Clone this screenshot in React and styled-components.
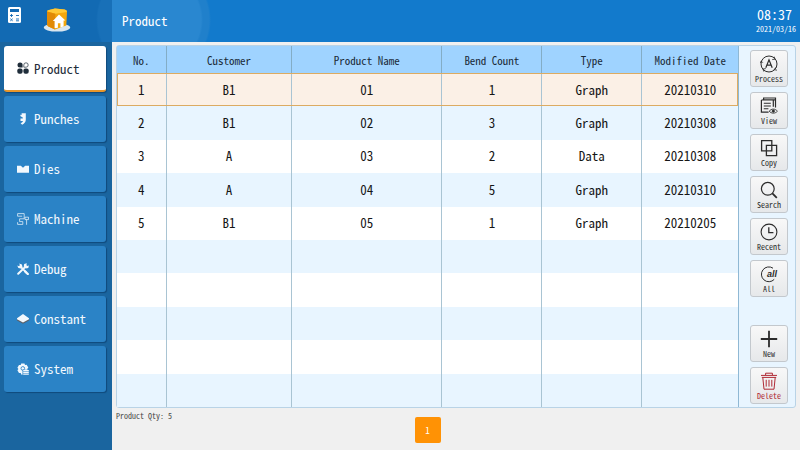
import React, { useState } from "react";
import styled, { createGlobalStyle, css } from "styled-components";

const menu = ["Product", "Punches", "Dies", "Machine", "Debug", "Constant", "System"];

// column widths in percent of the table
const columns = [
  { title: "No.", width: 8 },
  { title: "Customer", width: 20.2 },
  { title: "Product Name", width: 24.2 },
  { title: "Bend Count", width: 16.1 },
  { title: "Type", width: 16.1 },
  { title: "Modified Date", width: 15.4 },
];

const products = [
  ["1", "B1", "01", "1", "Graph", "20210310"],
  ["2", "B1", "02", "3", "Graph", "20210308"],
  ["3", "A", "03", "2", "Data", "20210308"],
  ["4", "A", "04", "5", "Graph", "20210310"],
  ["5", "B1", "05", "1", "Graph", "20210205"],
];

const PAGE_SIZE = 10;

const menuIcons = {
  Product: (
    <>
      <path d="M3 .4a2.6 2.6 0 0 1 2.6 2.8v2.2H3A2.5 2.5 0 0 1 3 .4z" fill="currentColor" />
      <rect x="0.3" y="6.4" width="5.3" height="5.3" rx="2" fill="currentColor" />
      <rect x="6.4" y="6.4" width="5.3" height="5.3" rx="2" fill="currentColor" />
      <path d="M9 .8a2.2 2.2 0 1 1 0 4.4H6.8V3A2.2 2.2 0 0 1 9 .8z" fill="none" stroke="currentColor" strokeWidth="0.7" />
    </>
  ),
  Punches: (
    <path
      d="M4.6 0.3h4.2v6.4c0 2-1.3 3.8-3.6 5l-1.6-1.4c1.4-.7 2.2-1.4 2.3-2.4H3.5V5.4h2.3V4.4L3.2 3l.6-1.4 1 .3z"
      fill="currentColor"
    />
  ),
  Dies: <path d="M0 2.8h3.8L6 4.8l2.2-2H12v7H0z" fill="currentColor" />,
  Machine: (
    <path
      d="M.6 3.2V.6h6.6v5.2H2.6v2.8h3.2v2.8H.6V9.2M.6 3.2h4.6M9.6 11.8V6.6M8 6.6V4.2h3.5v2.4H8"
      fill="none"
      stroke="currentColor"
      strokeWidth="0.9"
      opacity="0.8"
    />
  ),
  Debug: (
    <>
      <path d="M2.6 2.6 9.6 9.8" stroke="currentColor" strokeWidth="1.9" />
      <path d="M2.2.4 4.9 1.6l.6 2.3-1.7 1.5-2.4-.5L.2 2.4l1.9.9.9-.9z" fill="currentColor" />
      <path d="M8.2 8.5 10.8 11" stroke="currentColor" strokeWidth="2.4" strokeLinecap="round" />
      <path d="M1.2 10.7 8.8 3.4" stroke="currentColor" strokeWidth="2" strokeLinecap="round" />
      <path d="m9.8.2-.4 2 .6.7 1.9-.3-.6 2.3-2.6.6-2-1.9.5-2.7z" fill="currentColor" />
    </>
  ),
  Constant: (
    <>
      <path d="M0 5.5v1.9l6 3.3 6-3.3V5.5z" fill="#5b6068" />
      <path d="M6 1.1 12 5.2v1L6 9.4 0 6.2v-1z" fill="currentColor" />
    </>
  ),
  System: (
    <>
      <path
        d="M4.2.5h3.3l.5 1.4 1.6-.2 1.7 2.8-.9 1.3v1H5.5v4.9l-1.3-.1-.5-1.6-1.7.1L.4 7.3l1-1.3-1-1.3L2 1.9l1.7.1z"
        fill="currentColor"
      />
      <circle cx="5.8" cy="5.4" r="1.8" fill="none" stroke="#2b83c6" strokeWidth="0.9" />
      <path d="M6.2 7.6h5.6M6.2 9.4h5.6M6.2 11.2h5.6" stroke="currentColor" strokeWidth="1.2" />
    </>
  ),
};

const toolIcons = {
  Process: (
    <>
      <circle cx="9" cy="9" r="8" />
      <path d="m14.2 1.6.8 2.6-2.8.4M16.2 12.2l-2.2 2.4 3 .6M3.8 16.6 3 14l2.8-.4M.2 8l1-2 1.6 1.6" strokeWidth="0.8" />
      <path d="M5.8 12.8 9 4.8l3.2 8M6.9 10.2h4.2" strokeWidth="1.2" />
    </>
  ),
  View: (
    <>
      <path d="M3.6 2.2V1h11.9v9.5M15.5 2.8H2.6M1.4 3h11.9v6.8M1.4 3v12.2h7.2" strokeWidth="1.2" />
      <path d="M3.8 6.2h7M3.8 9h7M3.8 11.8h4.6" strokeWidth="1.1" />
      <path d="M9.2 14.2c2.3-2.8 5.9-2.8 8.2 0-2.3 2.6-5.9 2.6-8.2 0z" strokeWidth="0.9" />
      <circle cx="13.3" cy="14.1" r="1.1" fill="currentColor" />
    </>
  ),
  Copy: <path d="M1.6 1.6h10.2v10.2H1.6zM6.4 6.4h10.2v10.2H6.4z" strokeWidth="1.3" />,
  Search: (
    <>
      <circle cx="7.8" cy="7.8" r="6.4" strokeWidth="1.2" />
      <path d="m12.4 12.4 4.4 4.4" strokeWidth="1.8" />
    </>
  ),
  Recent: (
    <>
      <circle cx="9" cy="9" r="7.9" strokeWidth="1.1" />
      <path d="M8.8 4.2v5.4h4.6" strokeWidth="1.3" />
    </>
  ),
  All: (
    <>
      <path d="M13 3.2A7.4 7.4 0 1 0 14.2 14.4" />
      <text x="7" y="12" fontSize="9" fontWeight="bold" fontStyle="italic" fill="currentColor" stroke="none">
        all
      </text>
    </>
  ),
  New: <path d="M9 .8v16.4M.8 9h16.4" strokeWidth="1.8" />,
  Delete: (
    <path d="M1 3.4h16M5.6 3V1.2h6.8V3M1.8 5.4h14.4M2.8 5.6 4 17.2h10l1.2-11.6M6.2 7.8v6.8M9 7.8v6.8M11.8 7.8v6.8" />
  ),
};

const tools = ["Process", "View", "Copy", "Search", "Recent", "All"];

function ToolItem({ name, danger }) {
  return (
    <ToolButton type="button" $danger={danger}>
      <ToolIcon viewBox="0 0 18 18" aria-hidden="true">
        {toolIcons[name]}
      </ToolIcon>
      {name}
    </ToolButton>
  );
}

function HomeLogo() {
  return (
    <svg width="28" height="26" viewBox="0 0 28 26" aria-hidden="true">
      <ellipse cx="14" cy="20.6" rx="13.2" ry="4" fill="#d9e6ef" />
      <path d="M4 4.6Q4 3.4 6 3l6-1.4 9.5 1Q24 3 24 5l-.7 13.4L12 22.6l-6.6-3Q4.2 19 4.2 17.6z" fill="#f3a70c" />
      <path d="M4 4.6Q4 3.4 6 3l6-1.4 9.5 1Q24 3 24 5l-11.5 1.8z" fill="#ffc936" />
      <path d="m4 4.6 8.3 2.2-.3 15.8-6.6-3q-1.2-.6-1.2-2z" fill="#e18a05" />
      <path d="M9.8 14 16 7.6l6.4 6h-1.8v6l-3.2.8v-4.2h-2.5v4.6l-3.3.4V14z" fill="#fff" />
    </svg>
  );
}

function Calculator() {
  return (
    <svg width="13" height="16" viewBox="0 0 13 16" aria-hidden="true">
      <rect width="13" height="16" rx="1.5" fill="#fff" />
      <rect x="2" y="2" width="9" height="3" fill="#1269b3" />
      <path
        d="M2 8.5h3M3.5 7v3M8 8.5h3M2.3 11.7l2.4 2.2M4.7 11.7l-2.4 2.2M8 12h3M8 13.8h3"
        stroke="#1269b3"
        strokeWidth="0.9"
      />
    </svg>
  );
}

function App() {
  const [page, setPage] = useState("Product");
  const [selected, setSelected] = useState(0);
  const rows = Array.from({ length: PAGE_SIZE }, (_, i) => products[i] || columns.map(() => ""));

  return (
    <Screen>
      <GlobalStyle />
      <Brand>
        <BrandButton type="button" aria-label="Calculator">
          <Calculator />
        </BrandButton>
        <BrandButton type="button" aria-label="Home">
          <HomeLogo />
        </BrandButton>
      </Brand>
      <Header>
        <Title>{page}</Title>
        <Clock>
          <Time>08:37</Time>
          <Today>2021/03/16</Today>
        </Clock>
      </Header>
      <Sidebar>
        {menu.map((name) => (
          <MenuButton key={name} type="button" $active={name === page} onClick={() => setPage(name)}>
            <MenuIcon viewBox="0 0 12 12" aria-hidden="true">
              {menuIcons[name]}
            </MenuIcon>
            {name}
          </MenuButton>
        ))}
      </Sidebar>
      <Content>
        <Panel>
          <TableWrap>
            <Table>
              <thead>
                <tr>
                  {columns.map((column) => (
                    <HeadCell key={column.title} $width={column.width}>
                      {column.title}
                    </HeadCell>
                  ))}
                </tr>
              </thead>
              <tbody>
                {rows.map((row, i) => (
                  <Row key={i} $selected={i === selected} onClick={() => products[i] && setSelected(i)}>
                    {row.map((value, j) => (
                      <Cell key={j}>{value}</Cell>
                    ))}
                  </Row>
                ))}
              </tbody>
            </Table>
          </TableWrap>
          <Tools>
            {tools.map((name) => (
              <ToolItem key={name} name={name} />
            ))}
            <ToolSpacer />
            <ToolItem name="New" />
            <ToolItem name="Delete" danger />
          </Tools>
        </Panel>
        <Footer>
          <Quantity>Product Qty: {products.length}</Quantity>
          <PageButton type="button">1</PageButton>
        </Footer>
      </Content>
    </Screen>
  );
}

const GlobalStyle = createGlobalStyle`
  * {
    box-sizing: border-box;
  }

  body {
    margin: 0;
    background: #f0f0f0;
  }

  body, button {
    font-family: "Noto Sans Mono CJK SC", "Liberation Mono", "Noto Sans CJK SC", monospace;
  }

  button {
    cursor: pointer;
  }
`;

const Screen = styled.div`
  display: grid;
  grid-template-columns: 112px 1fr;
  grid-template-rows: 42px 1fr;
  height: 100vh;
  min-height: 440px;
`;

const Brand = styled.div`
  display: flex;
  align-items: flex-start;
  gap: 22px;
  padding: 7px 8px;
  background: radial-gradient(circle at 152px 20px, #1870b8 0 54px, #126ab3 56px);
`;

const BrandButton = styled.button`
  display: flex;
  padding: 0;
  border: 0;
  background: none;
`;

const Header = styled.header`
  display: flex;
  align-items: center;
  justify-content: space-between;
  padding: 0 4px 0 10px;
  color: #fff;
  background: radial-gradient(circle at 40px 20px, #2987d0 0 49px, #2080cb 51px 57px, #127acc 59px);
`;

const Title = styled.h1`
  margin: 0;
  font-size: 13px;
  font-weight: 400;
  line-height: 18px;
`;

const Clock = styled.div`
  display: flex;
  flex-direction: column;
  text-align: right;
`;

const Time = styled.span`
  padding-right: 4px;
  font-size: 14px;
  line-height: 16px;
`;

const Today = styled.span`
  font-size: 8px;
  line-height: 14px;
`;

const Sidebar = styled.nav`
  display: flex;
  flex-direction: column;
  gap: 4px;
  padding: 4px 6px 4px 4px;
  background: #1a659f;
`;

const MenuButton = styled.button`
  display: flex;
  align-items: center;
  gap: 5px;
  height: 46px;
  padding: 0 13px 1px;
  border: 0;
  border-radius: 3px;
  font-size: 13px;
  color: #f2f8fd;
  background: #2b83c6;
  box-shadow: 1px 1px 1px #104a7c;

  ${(props) =>
    props.$active &&
    css`
      padding-bottom: 0;
      color: #1f2d3a;
      background: #fff;
      border-bottom: 2px solid #e8962a;
    `}
`;

const MenuIcon = styled.svg`
  flex: none;
  width: 12px;
  height: 12px;
`;

const Content = styled.main`
  display: flex;
  flex-direction: column;
  min-width: 0;
  padding: 3px 4px 0;
  background: #f0f0f0;
`;

const Panel = styled.div`
  display: flex;
  flex: 1;
  min-height: 0;
  border: 1px solid #b9d3e6;
  border-radius: 3px;
  background: #e8f5ff;
`;

const TableWrap = styled.div`
  flex: 1;
  border-right: 1px solid #8fb8d4;
`;

const Table = styled.table`
  width: 100%;
  height: 100%;
  table-layout: fixed;
  border-spacing: 0;
`;

const HeadCell = styled.th`
  width: ${(props) => props.$width}%;
  height: 27px;
  padding: 0;
  border-right: 1px solid #83adc6;
  font-size: 11px;
  font-weight: 400;
  line-height: 16px;
  color: #1b2b38;
  background: #9fd3ff;

  &:last-child {
    border-right: 0;
  }
`;

const Cell = styled.td`
  height: 33px;
  padding: 0;
  border-right: 1px solid #a9c4d3;
  font-size: 13px;
  line-height: 18px;
  text-align: center;
  color: #161616;

  &:last-child {
    border-right: 0;
  }
`;

const Row = styled.tr`
  background: #fff;

  &:nth-child(even) {
    background: #e8f5ff;
  }

  ${(props) =>
    props.$selected &&
    css`
      background: #fbf0e6;
      outline: 1px solid #dcab62;
      outline-offset: -1px;
    `}
`;

const Tools = styled.div`
  display: flex;
  flex-direction: column;
  gap: 5px;
  padding: 4px 7px 3px 11px;
`;

const ToolButton = styled.button`
  display: flex;
  flex-direction: column;
  align-items: center;
  gap: 1px;
  width: 38px;
  height: 37px;
  padding: 4px 0 0;
  border: 1px solid #c3c8cd;
  border-radius: 3px;
  font-size: 8px;
  line-height: 10px;
  color: ${(props) => (props.$danger ? "#b02a35" : "#2c2c2c")};
  background: linear-gradient(#f8f8f8, #e6e8ea);
`;

const ToolIcon = styled.svg`
  width: 18px;
  height: 18px;
  fill: none;
  stroke: currentColor;
  font-family: "Liberation Sans", sans-serif;
`;

const ToolSpacer = styled.div`
  flex: 1;
`;

const Footer = styled.footer`
  display: grid;
  grid-template-columns: 1fr auto 1fr;
  height: 42px;
  padding-right: 57px;
`;

const Quantity = styled.span`
  padding-top: 3px;
  font-size: 8px;
  line-height: 10px;
  color: #4a4a4a;
`;

const PageButton = styled.button`
  width: 26px;
  height: 26px;
  margin-top: 9px;
  padding: 0;
  border: 0;
  border-radius: 2px;
  font-size: 9px;
  color: #fff;
  background: #ff9205;
`;

export default App;
